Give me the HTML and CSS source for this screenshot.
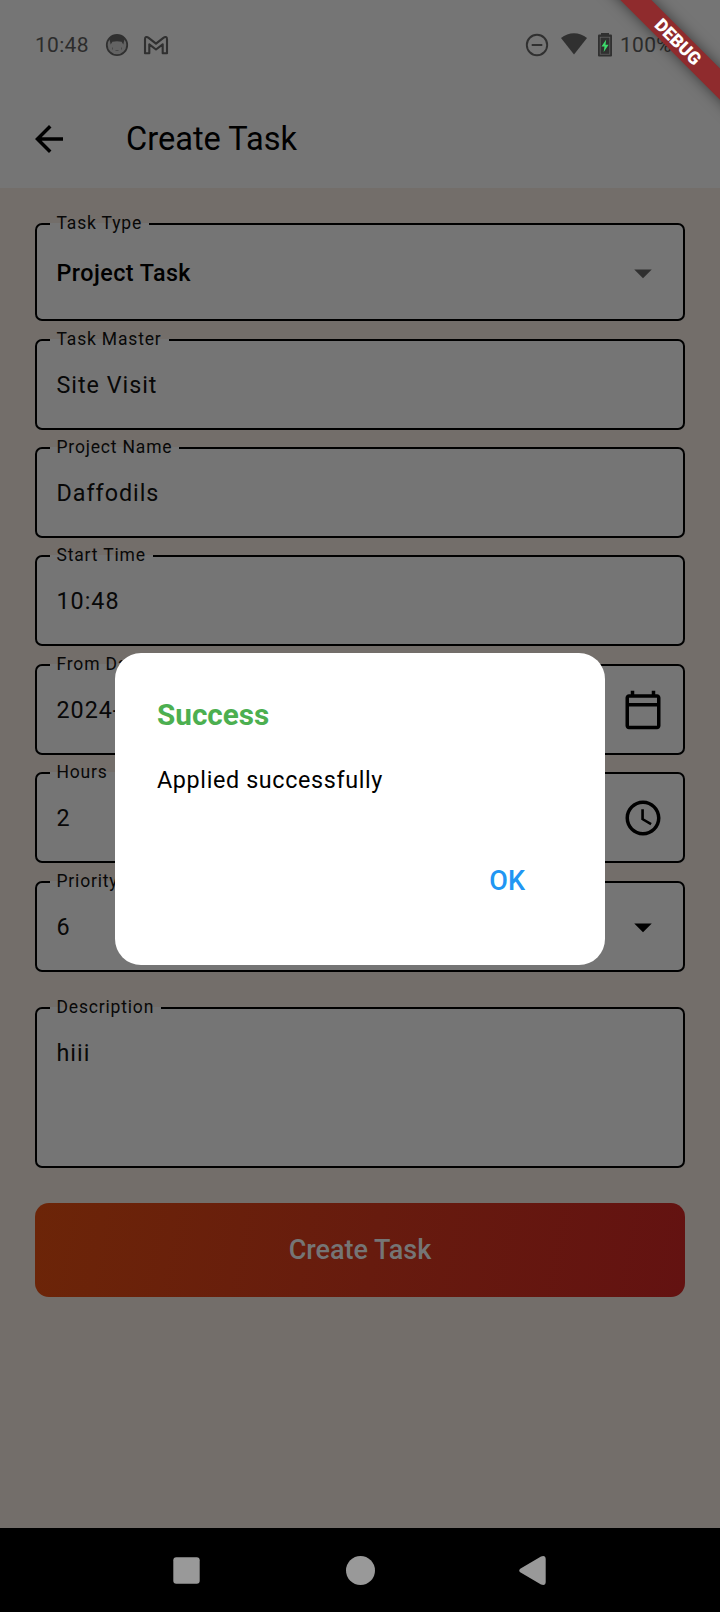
FILE: index.html
```html
<!DOCTYPE html>
<html lang="en">
<head>
<meta charset="utf-8">
<title>Create Task</title>
<link rel="stylesheet" href="styles.css">
</head>
<body>
<div class="screen">
  <header class="top">
    <div class="status">
      <span class="clock">10:48</span>
      <svg class="s-face" width="24" height="24" viewBox="0 0 24 24"><circle cx="12" cy="12" r="10.200" fill="#636363" stroke="#303030" stroke-width="1.800"/><path d="M4.500 6C8 1 16 1 19.500 6L18.300 11.500 16.600 8.800C13.500 8 10.500 8 7.400 8.800L5.700 11.500z" fill="#303030"/><path d="M7.500 14.500v2M16.500 14.500v2M10.500 17.500h3" stroke="#4a4a4a" stroke-width="1"/></svg>
      <svg class="s-mail" width="26" height="20" viewBox="0 0 26 20"><path d="M2 18.200V4.200C2 1.800 4 1.500 5.300 2.600L13 8.600l7.700-6C22 1.500 24 1.800 24 4.200v14h-4.300V9.300L13 14.500 6.300 9.300v8.900z" fill="none" stroke="#303030" stroke-width="2.100" stroke-linejoin="round"/></svg>
      <span class="grow"></span>
      <svg class="s-dnd" width="24" height="24" viewBox="0 0 24 24"><circle cx="12" cy="12" r="10.200" fill="none" stroke="#303030" stroke-width="1.900"/><path d="M6.700 12h10.600" stroke="#303030" stroke-width="2"/></svg>
      <svg class="s-wifi" width="26" height="22" viewBox="0 0 26 22"><path d="M0 5C7.500-1.400 18.500-1.400 26 5L13 21.500z" fill="#303030"/></svg>
      <svg class="s-batt" width="14" height="24" viewBox="0 0 14 24"><path d="M3 0h8v2H3z" fill="#303030"/><rect y="1.600" width="14" height="22" rx="1" fill="#303030"/><rect x="2.200" y="4.200" width="9.600" height="17" fill="none" stroke="#686868" stroke-width=".7"/><path d="M8.200 6.500 3.500 13.500h3L5.700 19l4.900-7.300H7.500z" fill="#3ddc6c"/></svg>
      <span class="percent">100%</span>
    </div>
    <div class="bar">
      <svg width="42" height="42" viewBox="0 0 24 24"><path d="M20 11H7.830l5.590-5.590L12 4l-8 8 8 8 1.410-1.410L7.830 13H20z"/></svg>
      <h1>Create Task</h1>
    </div>
  </header>

  <main class="form">
    <fieldset class="field type"><legend>Task Type</legend><div class="row"><span class="strong">Project Task</span><svg class="icon muted" viewBox="0 0 24 24"><path d="M7 10l5 5 5-5z"/></svg></div></fieldset>
    <fieldset class="field"><legend>Task Master</legend><div class="row"><span>Site Visit</span></div></fieldset>
    <fieldset class="field"><legend>Project Name</legend><div class="row"><span>Daffodils</span></div></fieldset>
    <fieldset class="field"><legend>Start Time</legend><div class="row"><span>10:48</span></div></fieldset>
    <fieldset class="field"><legend>From Date</legend><div class="row"><span>2024-</span><svg class="icon" viewBox="0 0 24 24"><path d="M20 3h-1V1h-2v2H7V1H5v2H4c-1.100 0-2 .9-2 2v16c0 1.100.9 2 2 2h16c1.100 0 2-.9 2-2V5c0-1.100-.9-2-2-2zm0 2v3H4V5zM4 21V10h16v11z"/></svg></div></fieldset>
    <fieldset class="field"><legend>Hours</legend><div class="row"><span>2</span><svg class="icon" viewBox="0 0 24 24"><path d="M11.990 2C6.470 2 2 6.480 2 12s4.470 10 9.990 10C17.520 22 22 17.520 22 12S17.520 2 11.990 2zM12 20c-4.420 0-8-3.580-8-8s3.580-8 8-8 8 3.580 8 8-3.580 8-8 8zM12.500 7H11v6l5.250 3.150.75-1.230-4.500-2.670z"/></svg></div></fieldset>
    <fieldset class="field"><legend>Priority</legend><div class="row"><span>6</span><svg class="icon" viewBox="0 0 24 24"><path d="M7 10l5 5 5-5z"/></svg></div></fieldset>
    <fieldset class="field area"><legend>Description</legend><div class="row"><span>hiii</span></div></fieldset>
    <button class="submit">Create Task</button>
  </main>

  <nav class="nav">
    <svg width="27" height="27" viewBox="0 0 27 27"><rect x=".3" y=".3" width="26.400" height="26.400" rx="3"/></svg>
    <svg class="home" width="29" height="29" viewBox="0 0 29 29"><circle cx="14.500" cy="14.500" r="14.500"/></svg>
    <svg width="27" height="29" viewBox="0 0 27 29"><path d="M1.200 12.700 22 .5Q26.600-1 26.700 3v23q-.1 4-4.700 2.500L1.200 16.300q-2-1.800 0-3.600z"/></svg>
  </nav>

  <section class="dialog" role="dialog">
    <h2>Success</h2>
    <p>Applied successfully</p>
    <button class="ok">OK</button>
  </section>
  <div class="corner"><div class="ribbon">DEBUG</div></div>
</div>
</body>
</html>
```

FILE: styles.css
```css
* { box-sizing: border-box; }
body { margin: 0; font-family: Roboto, sans-serif; }
.screen {
  position: relative;
  width: 720px;
  height: 1612px;
  overflow: hidden;
  display: flex;
  flex-direction: column;
  background: #736e6a;
}
h1, h2, p { margin: 0; font-weight: 400; }
button { border: 0; font-family: inherit; }
svg { display: block; flex: none; }

.top { height: 188px; background: #757575; }
.status {
  display: flex;
  align-items: center;
  height: 90px;
  padding: 0 48px 0 35px;
  font-size: 21px;
  letter-spacing: .3px;
  color: #2c2c2c;
}
.clock { width: 70px; }
.s-mail { margin-left: 14px; }
.grow { flex: 1; }
.s-wifi { margin-left: 12px; margin-top: -3px; }
.s-batt { margin-left: 11px; margin-right: 8px; margin-top: -1px; }
.bar { display: flex; align-items: center; height: 98px; padding-left: 28px; }
.bar h1 { margin-left: 56px; font-size: 32.600px; line-height: 40px; }

.form { flex: 1; padding: 26px 35px 0; }
.field {
  min-width: 0;
  height: 100px;
  margin: 0 0 8.375px;
  padding: 0 19px 0 13px;
  border: 2px solid #000;
  border-radius: 7px;
  background: #757575;
}
.field legend {
  height: 20px;
  padding: 0 7px 0 6.500px;
  margin-left: 0;
  font-size: 17.500px;
  line-height: 18px;
  letter-spacing: .82px;
  color: #080808;
}
.row {
  display: flex;
  align-items: center;
  justify-content: space-between;
  height: 70px;
  padding-left: 6.500px;
  font-size: 23.330px;
  letter-spacing: .98px;
  color: #080808;
}
.type { height: 107px; margin-bottom: 8.700px; }
.type .row { height: 77px; }
.strong { font-weight: 500; letter-spacing: .45px; color: #000; }
.icon { width: 42px; height: 42px; }
.muted { fill: #303030; }
.area { height: 170px; margin-top: 26.400px; margin-bottom: 35px; }
.submit {
  display: block;
  width: 650px;
  height: 94.500px;
  padding: 0;
  border-radius: 14px;
  background: linear-gradient(100deg, #6c2508, #671b0e 52%, #631211);
  color: #757575;
  font-size: 27px;
  font-weight: 500;
}

.nav {
  height: 84px;
  display: flex;
  align-items: center;
  justify-content: space-between;
  padding: 0 174px 0 173px;
  background: #000;
  fill: #999;
}
.home { margin-left: 1.600px; }

.dialog {
  position: absolute;
  left: 115px;
  top: 653px;
  width: 490px;
  height: 312px;
  padding: 42px 42px;
  display: flex;
  flex-direction: column;
  border-radius: 26px;
  background: #fff;
}
.dialog h2 { font-size: 29.700px; line-height: 40px; font-weight: 700; color: #4caf50; }
.dialog p { margin-top: 27.300px; font-size: 23.330px; line-height: 36px; letter-spacing: .64px; color: #000; }
.ok {
  align-self: flex-end;
  margin: 63px 38px 0 0;
  padding: 0;
  background: none;
  color: #2196f3;
  font-size: 27px;
  line-height: 40px;
  font-weight: 500;
}

.corner { position: absolute; right: 0; top: 0; width: 140px; height: 140px; overflow: hidden; }
.ribbon {
  position: absolute;
  left: -2px;
  top: 31px;
  width: 200px;
  height: 21.500px;
  transform: rotate(45deg);
  background: #8f2b2d;
  box-shadow: 0 0 14px rgba(0, 0, 0, .5);
  color: #fff;
  font-size: 17.850px;
  font-weight: 900;
  line-height: 21.500px;
  text-align: center;
}
```
